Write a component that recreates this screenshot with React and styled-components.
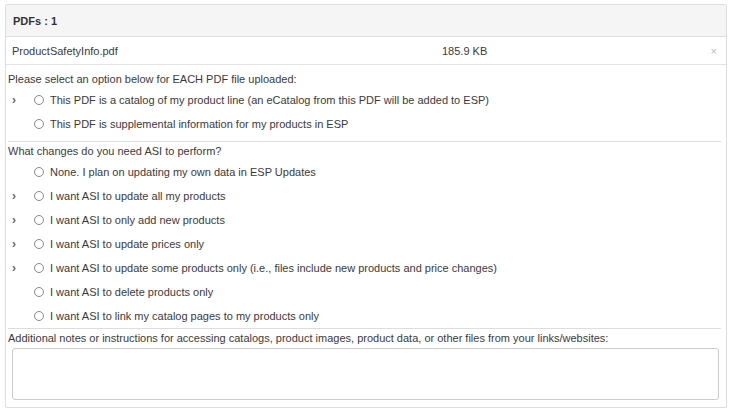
import React from 'react'
import styled, { createGlobalStyle } from 'styled-components'

const Global = createGlobalStyle`
  body {
    margin: 0;
    background: #fff;
    font-family: "Liberation Sans", Arial, sans-serif;
    font-size: 11px;
    color: #3a3a3a;
  }
`

const Page = styled.div`
  padding: 4px 6px 6px 5px;
`

const Panel = styled.div`
  border: 1px solid #ddd;
  border-radius: 2px;
`

const Header = styled.div`
  height: 31px;
  display: flex;
  align-items: center;
  padding-left: 7px;
  background: #f5f5f5;
  border-bottom: 1px solid #ddd;
  font-weight: bold;
  color: #333;
`

const FileRow = styled.div`
  height: 27px;
  display: grid;
  grid-template-columns: 430px 1fr auto;
  align-items: center;
  padding: 0 9px 0 6px;
  border-bottom: 1px solid #e3e3e3;
`

const Remove = styled.span`
  color: #bbb;
  font-size: 11px;
`

const Body = styled.div`
  padding: 5px 5px 7px 2px;
`

const Question = styled.div`
  height: 18px;
  display: flex;
  align-items: center;
`

const Option = styled.div`
  height: 24px;
  display: flex;
  align-items: center;
  padding-left: 4px;
`

const Chevron = styled.span`
  width: 22px;
  color: #666;
  font-size: 12px;
  font-weight: bold;
  visibility: ${p => (p.show ? 'visible' : 'hidden')};
`

const Radio = styled.span`
  width: 8px;
  height: 8px;
  border: 1px solid #888;
  border-radius: 50%;
  margin-right: 6px;
  flex-shrink: 0;
`

const Divider = styled.div`
  border-top: 1px solid #ddd;
  margin-top: ${p => p.top || 0}px;
`

const Notes = styled.textarea`
  display: block;
  box-sizing: border-box;
  width: calc(100% - 6px);
  height: 52px;
  margin: 1px 0 0 4px;
  border: 1px solid #ccc;
  border-radius: 3px;
  resize: none;
  font-family: inherit;
`

const first = [
  { t: 'This PDF is a catalog of my product line (an eCatalog from this PDF will be added to ESP)', c: true },
  { t: 'This PDF is supplemental information for my products in ESP', c: false },
]

const second = [
  { t: 'None. I plan on updating my own data in ESP Updates', c: false },
  { t: 'I want ASI to update all my products', c: true },
  { t: 'I want ASI to only add new products', c: true },
  { t: 'I want ASI to update prices only', c: true },
  { t: 'I want ASI to update some products only (i.e., files include new products and price changes)', c: true },
  { t: 'I want ASI to delete products only', c: false },
  { t: 'I want ASI to link my catalog pages to my products only', c: false },
]

const Row = ({ t, c }) => (
  <Option>
    <Chevron show={c}>›</Chevron>
    <Radio />
    <span>{t}</span>
  </Option>
)

export default function App() {
  return (
    <Page>
      <Global />
      <Panel>
        <Header>PDFs : 1</Header>
        <FileRow>
          <span>ProductSafetyInfo.pdf</span>
          <span>185.9 KB</span>
          <Remove>×</Remove>
        </FileRow>
        <Body>
          <Question>Please select an option below for EACH PDF file uploaded:</Question>
          {first.map(o => <Row key={o.t} {...o} />)}
          <Divider top={5} />
          <Question>What changes do you need ASI to perform?</Question>
          {second.map(o => <Row key={o.t} {...o} />)}
          <Divider />
          <Question>Additional notes or instructions for accessing catalogs, product images, product data, or other files from your links/websites:</Question>
          <Notes />
        </Body>
      </Panel>
    </Page>
  )
}
